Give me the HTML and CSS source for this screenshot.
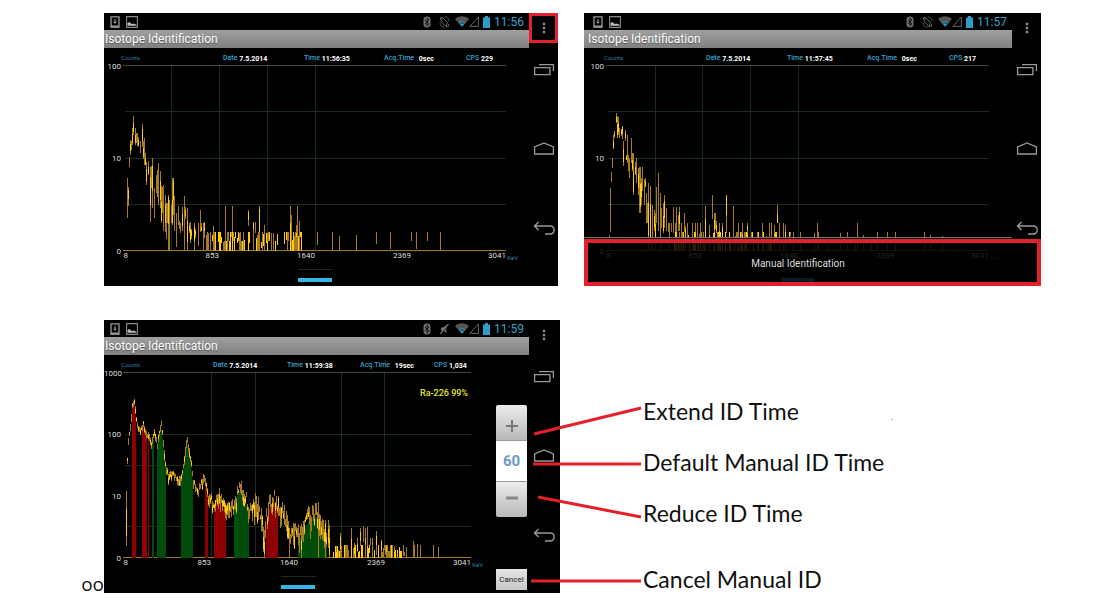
FILE: index.html
```html
<!DOCTYPE html>
<html lang="en">
<head>
    <meta charset="UTF-8">
    <meta name="viewport" content="width=device-width, initial-scale=1.0">
    <title>Isotope Identification - Manual ID</title>
    <link rel="stylesheet" href="styles.css">
</head>
<body>
    <!-- Shared icons -->
    <svg class="sprite" aria-hidden="true">
        <symbol id="i-usb" viewBox="0 0 10 12">
            <path d="M1 .8h8v10.4H1z" fill="none" stroke="#999" stroke-width="1.3"/>
            <path d="M1 9.5h8v2H1z" fill="#999"/>
            <path d="M5 3v4M3.8 5.6L5 7.3l1.200-1.700" fill="none" stroke="#aaa"/>
        </symbol>
        <symbol id="i-pic" viewBox="0 0 12 12">
            <path d="M.6.6h10.800v10.800H.6z" fill="none" stroke="#888" stroke-width="1.100"/>
            <path d="M1.500 9.800V7l2-1 1.500 1.500 1 .5 1.500-.5 3 1.300v1z" fill="#bbb"/>
        </symbol>
        <symbol id="i-bt" viewBox="0 0 8 12">
            <rect x=".5" y=".5" width="7" height="11" rx="3.200" fill="#6c6c6c"/>
            <path d="M2 4l4 4-2 2V2l2 2-4 4" fill="none" stroke="#111" stroke-width=".9"/>
        </symbol>
        <symbol id="i-rotate" viewBox="0 0 11 12">
            <path d="M3.500 1.500l5 5-1.500 4-5-5z" fill="none" stroke="#6c6c6c"/>
            <path d="M5.500 .8c2.500 0 4.500 1.500 4.500 4.500M5.500 11.200C3 11.200 1 9.700 1 6.700M9.500 8v2.500H7M1.500 4V1.500H4" fill="none" stroke="#555"/>
        </symbol>
        <symbol id="i-mute" viewBox="0 0 11 12">
            <path d="M2 4.500h2L7.500 2v8L4 7.500H2z" fill="#777"/>
            <path d="M9.500 1l-8 10" stroke="#777" stroke-width="1.300"/>
            <path d="M10 1.800l-8 10" stroke="#000" stroke-width=".7"/>
        </symbol>
        <symbol id="i-wifi" viewBox="0 0 14 11">
            <path d="M0 3c4-3.600 10-3.600 14 0L7 11z" fill="#555"/>
            <path d="M3.800 6.500c2-1.600 4.400-1.600 6.400 0L7 10.600z" fill="#2a9cc8"/>
            <path d="M4.800 7.600c1.300-1 3.100-1 4.400 0" fill="none" stroke="#000" stroke-width=".7"/>
        </symbol>
        <symbol id="i-signal" viewBox="0 0 10 11">
            <path d="M9.400 1v9.400H.8z" fill="none" stroke="#666"/>
        </symbol>
        <symbol id="i-battery" viewBox="0 0 7 12">
            <path d="M2 0h3v1.500h2V12H0V1.500h2z" fill="#2f9dc9"/>
        </symbol>
        <symbol id="i-more" viewBox="0 0 4 12">
            <path d="M.8 .8h2.400v2.400H.8zM.8 4.800h2.400v2.400H.8zM.8 8.800h2.400v2.400H.8z" fill="#888"/>
        </symbol>
        <symbol id="i-recent" viewBox="0 0 22 13">
            <path d="M1.600 4.600h15.300v7H1.600zM6 1.600h14.400V8" fill="none" stroke="#999" stroke-width="1.300"/>
        </symbol>
        <symbol id="i-home" viewBox="0 0 22 13">
            <path d="M1.600 12V5L11 1l9.400 4v7z" fill="none" stroke="#999" stroke-width="1.300"/>
        </symbol>
        <symbol id="i-back" viewBox="0 0 24 14">
            <path d="M6.500 1L2.500 5l4 4M2.500 5H18c5.500 0 5.500 8 0 8h-5" fill="none" stroke="#999" stroke-width="1.400"/>
        </symbol>
    </svg>

    <main class="page">
        <div class="row row-top">
            <section class="screen">
                <div class="app">
                    <div class="status">
                        <svg class="i-usb"><use href="#i-usb"/></svg>
                        <svg class="i-pic"><use href="#i-pic"/></svg>
                        <svg class="i-bt"><use href="#i-bt"/></svg>
                        <svg class="i-mode"><use href="#i-rotate"/></svg>
                        <svg class="i-wifi"><use href="#i-wifi"/></svg>
                        <svg class="i-signal"><use href="#i-signal"/></svg>
                        <svg class="i-battery"><use href="#i-battery"/></svg>
                        <span class="clock">11:56</span>
                    </div>
                    <h2 class="title">Isotope Identification</h2>
                    <div class="meta">
                        <span class="unit">Counts</span>
                        <span>Date <b>7.5.2014</b></span>
                        <span>Time <b>11:56:35</b></span>
                        <span>Acq.Time <b class="acq">0sec</b></span>
                        <span>CPS <b>229</b></span>
                    </div>
                    <svg class="chart" id="chart-a" viewBox="0 0 425 223"></svg>
                </div>
                <nav class="rail">
                    <button class="marked" aria-label="Menu"><svg class="i-more"><use href="#i-more"/></svg></button>
                    <button aria-label="Recent apps"><svg class="i-nav"><use href="#i-recent"/></svg></button>
                    <button aria-label="Home"><svg class="i-nav"><use href="#i-home"/></svg></button>
                    <button aria-label="Back"><svg class="i-back"><use href="#i-back"/></svg></button>
                </nav>
            </section>

            <section class="screen inset">
                <div class="app">
                    <div class="status">
                        <svg class="i-usb"><use href="#i-usb"/></svg>
                        <svg class="i-pic"><use href="#i-pic"/></svg>
                        <svg class="i-bt"><use href="#i-bt"/></svg>
                        <svg class="i-mode"><use href="#i-rotate"/></svg>
                        <svg class="i-wifi"><use href="#i-wifi"/></svg>
                        <svg class="i-signal"><use href="#i-signal"/></svg>
                        <svg class="i-battery"><use href="#i-battery"/></svg>
                        <span class="clock">11:57</span>
                    </div>
                    <h2 class="title">Isotope Identification</h2>
                    <div class="meta">
                        <span class="unit">Counts</span>
                        <span>Date <b>7.5.2014</b></span>
                        <span>Time <b>11:57:45</b></span>
                        <span>Acq.Time <b class="acq">0sec</b></span>
                        <span>CPS <b>217</b></span>
                    </div>
                    <svg class="chart" id="chart-b" viewBox="-3 0 428 223"></svg>
                    <button class="menu-item">Manual Identification</button>
                </div>
                <nav class="rail">
                    <button aria-label="Menu"><svg class="i-more"><use href="#i-more"/></svg></button>
                    <button aria-label="Recent apps"><svg class="i-nav"><use href="#i-recent"/></svg></button>
                    <button aria-label="Home"><svg class="i-nav"><use href="#i-home"/></svg></button>
                    <button aria-label="Back"><svg class="i-back"><use href="#i-back"/></svg></button>
                </nav>
                <div class="menu-frame"></div>
            </section>
        </div>

        <div class="row row-bottom">
            <span class="margin-note">oo</span>

            <section class="screen wide-rail">
                <div class="app">
                    <div class="status">
                        <svg class="i-usb"><use href="#i-usb"/></svg>
                        <svg class="i-pic"><use href="#i-pic"/></svg>
                        <svg class="i-bt"><use href="#i-bt"/></svg>
                        <svg class="i-mode"><use href="#i-mute"/></svg>
                        <svg class="i-wifi"><use href="#i-wifi"/></svg>
                        <svg class="i-signal"><use href="#i-signal"/></svg>
                        <svg class="i-battery"><use href="#i-battery"/></svg>
                        <span class="clock">11:59</span>
                    </div>
                    <h2 class="title">Isotope Identification</h2>
                    <div class="split">
                        <div class="plot">
                            <div class="meta tight">
                                <span class="unit">Counts</span>
                                <span>Date <b>7.5.2014</b></span>
                                <span>Time <b>11:59:38</b></span>
                                <span>Acq.Time <b class="acq">19sec</b></span>
                                <span>CPS <b>1,034</b></span>
                            </div>
                            <svg class="chart" id="chart-c" viewBox="0 0 388 223"></svg>
                        </div>
                        <div class="controls">
                            <div class="stepper">
                                <button aria-label="Extend time"><svg viewBox="0 0 12 12"><path d="M6 0v12M0 6h12" stroke="#777" stroke-width="2"/></svg></button>
                                <input type="text" value="60" aria-label="ID time">
                                <button aria-label="Reduce time"><svg viewBox="0 0 12 12"><path d="M0 4h12" stroke="#888" stroke-width="3"/></svg></button>
                            </div>
                            <button class="cancel">Cancel</button>
                        </div>
                    </div>
                </div>
                <nav class="rail">
                    <button aria-label="Menu"><svg class="i-more"><use href="#i-more"/></svg></button>
                    <button aria-label="Recent apps"><svg class="i-nav"><use href="#i-recent"/></svg></button>
                    <button aria-label="Home"><svg class="i-nav"><use href="#i-home"/></svg></button>
                    <button aria-label="Back"><svg class="i-back"><use href="#i-back"/></svg></button>
                </nav>
            </section>

            <div class="callouts">
                <svg class="leaders" viewBox="0 0 116 273">
                    <path d="M6 114L113 88M5 144h108M10 177l103 20M3 261h110" stroke="#e3202b" stroke-width="3"/>
                </svg>
                <ul>
                    <li>Extend ID Time<span class="speck">.</span></li>
                    <li>Default Manual ID Time</li>
                    <li>Reduce ID Time</li>
                    <li>Cancel Manual ID</li>
                </ul>
            </div>
        </div>
    </main>
    <script src="charts.js"></script>
</body>
</html>
```

FILE: styles.css
```css
body {
    margin: 0;
    background: #fff;
    font-family: Roboto, Arial, sans-serif;
    overflow-x: hidden;
}
button, input {
    font-family: inherit;
    margin: 0;
    padding: 0;
    border: 0;
}
.sprite {
    position: absolute;
    width: 0;
    height: 0;
}
.page {
    padding: 13px 68px 0 0;
}
.row {
    display: grid;
    align-items: start;
}
.row-top {
    grid-template-columns: 454fr 457fr;
    gap: 26px;
    padding-left: 104px;
}
.row-bottom {
    grid-template-columns: 104px 456fr 481fr;
    margin-top: 34px;
}

/* Device screen */
.screen {
    display: flex;
    position: relative;
    background: #000;
    color: #fff;
}
.app {
    flex: 1;
    min-width: 0;
    position: relative;
}
.status {
    display: flex;
    align-items: center;
    height: 17px;
    padding: 0 5px 0 6px;
}
.title {
    margin: 0;
    padding-left: 1px;
    height: 18px;
    line-height: 18px;
    font-size: 12px;
    font-weight: 400;
    background: linear-gradient(#a0a0a0, #808080);
    text-shadow: 0 1px 1px #555;
}
.clock {
    font-size: 12px;
    line-height: 16px;
    color: #38a3cd;
    margin-left: 4px;
}
.i-usb {
    width: 10px;
    height: 12px;
}
.i-pic {
    width: 12px;
    height: 12px;
    margin-left: 6px;
}
.i-bt {
    width: 8px;
    height: 12px;
    margin-left: auto;
}
.i-mode {
    width: 11px;
    height: 12px;
    margin: 0 5px 0 8px;
}
.i-wifi {
    width: 14px;
    height: 11px;
}
.i-signal {
    width: 10px;
    height: 11px;
}
.i-battery {
    width: 7px;
    height: 12px;
    margin-left: 4px;
}

/* Header line above the chart */
.meta {
    display: grid;
    grid-template-columns: 102px 81px 80px 82px 1fr;
    height: 15px;
    padding: 5px 0 0 17px;
    box-sizing: border-box;
    font-size: 7px;
    line-height: 10px;
    font-weight: 500;
    color: #38a3cd;
    white-space: nowrap;
}
.meta.tight {
    grid-template-columns: 92px 74px 73px 74px 1fr;
}
.meta b {
    color: #fff;
    position: relative;
    top: 1px;
}
.meta .acq {
    margin-left: 3px;
}
.meta .unit {
    font-size: 6px;
    font-weight: 400;
    color: #2a7da0;
}
.inset .status {
    padding-left: 9px;
}
.inset .title {
    padding-left: 4px;
}
.inset .meta {
    padding-left: 20px;
}

/* Chart */
.chart {
    display: block;
    width: 100%;
    height: auto;
    font-size: 8px;
    fill: #ddd;
}
.chart line {
    shape-rendering: crispEdges;
}
.chart .grid {
    stroke: #1c2c1c;
}
.chart .axis {
    stroke: #3c4a38;
}
.chart .base {
    stroke: #a07818;
}
.chart .dim {
    stroke: #a57c25;
}
.chart .hot {
    stroke: #fc1;
}
.chart .red {
    fill: #8c0000;
}
.chart .green {
    fill: #004c0a;
}
.chart .kev {
    font-size: 6px;
    fill: #2a86b0;
}
.chart .tag {
    font-size: 9px;
    font-weight: 500;
    fill: #e6e619;
}
.chart .pager {
    fill: #33b5e5;
}

/* Navigation rail */
.rail {
    width: 29px;
    display: grid;
    grid-template-rows: 30px 52px 106px 54px;
}
.wide-rail .rail {
    width: 31px;
    padding-right: 1px;
    box-sizing: border-box;
}
.rail button {
    display: flex;
    align-items: center;
    justify-content: center;
    background: none;
}
.rail .marked {
    border: 3px solid #e3202b;
}
.i-more {
    width: 4px;
    height: 12px;
}
.i-nav {
    width: 22px;
    height: 13px;
}
.i-back {
    width: 24px;
    height: 14px;
}

/* Options menu */
.menu-item {
    position: absolute;
    left: 0;
    right: 0;
    bottom: 0;
    width: 100%;
    height: 49px;
    padding-top: 3px;
    border-top: 1px solid #777;
    background: rgba(0, 0, 0, 0.85);
    color: #ddd;
    font-size: 10px;
    line-height: 10px;
}
.menu-frame {
    position: absolute;
    left: 0;
    right: 0;
    bottom: 0;
    height: 47px;
    box-sizing: border-box;
    border: 4px solid #e3202b;
    pointer-events: none;
}

/* Manual ID controls */
.split {
    display: flex;
}
.plot {
    flex: 1;
    min-width: 0;
}
.controls {
    width: 37px;
    padding: 50px 2px 3px 4px;
    box-sizing: border-box;
    display: flex;
    flex-direction: column;
    justify-content: space-between;
}
.stepper {
    display: flex;
    flex-direction: column;
    border-radius: 2px;
    overflow: hidden;
}
.stepper button {
    height: 35px;
    background: linear-gradient(#ececec, #b8b8b8);
}
.stepper button:first-child {
    padding-top: 6px;
}
.stepper button svg {
    display: block;
    width: 12px;
    height: 12px;
    margin: 0 auto;
}
.stepper input {
    height: 42px;
    width: 100%;
    background: #fff;
    border-top: 1px solid #999;
    border-bottom: 1px solid #999;
    box-sizing: border-box;
    text-align: center;
    font-size: 15px;
    font-weight: 700;
    color: #6c9ad0;
}
.cancel {
    height: 21px;
    background: linear-gradient(#e4e4e4, #c8c8c8);
    color: #222;
    font-size: 8px;
}

/* Callouts */
.callouts {
    position: relative;
    font-family: Lato, Calibri, sans-serif;
}
.callouts ul {
    list-style: none;
    margin: 0;
    padding: 78px 0 0 83px;
    font-size: 23px;
    line-height: 26px;
    color: #111;
}
.callouts li {
    margin-bottom: 25px;
}
.callouts li:last-child {
    margin: 40px 0 0;
}
.leaders {
    position: absolute;
    left: -32px;
    top: 0;
    width: 116px;
    height: 273px;
}
.speck {
    font-size: 10px;
    line-height: 10px;
    color: #888;
    margin-left: 92px;
}
.margin-note {
    align-self: end;
    text-align: right;
    font-family: "Open Sans", sans-serif;
    font-size: 19px;
    line-height: 18px;
    color: #111;
}
```

FILE: charts.js
```js
const NS = 'http://www.w3.org/2000/svg';
const BASE = 188;

function add(svg, name, attrs, text) {
    const el = document.createElementNS(NS, name);
    for (const key in attrs) el.setAttribute(key, attrs[key]);
    if (text) el.textContent = text;
    svg.appendChild(el);
}

function line(svg, cls, x1, y1, x2, y2) {
    add(svg, 'line', { class: cls, x1, y1, x2, y2 });
}

function label(svg, x, y, text, cls) {
    add(svg, 'text', { x, y, 'text-anchor': 'end', class: cls || '' }, text);
}

// small repeatable generator, so the noise is the same on each load
let seed = 7;
function rnd() {
    seed = (seed * 16807) % 2147483647;
    return seed / 2147483647;
}

function bar(svg, x, top, bottom) {
    x += 0.5;
    line(svg, 'dim', x, top, x, bottom);
    if (rnd() > 0.5) {
        const len = (bottom - top) * 0.5;
        const start = top + rnd() * (bottom - top - len);
        line(svg, 'hot', x, start, x, start + len);
    }
}

// stems: "x,top,bottom" (bottom defaults to the base line)
function stems(svg, data) {
    data.trim().split(/\s+/).forEach(item => {
        const [x, top, bottom] = item.split(',').map(Number);
        bar(svg, x, top, bottom || BASE);
    });
}

// isolated counts, one plain line each
function singles(svg, data) {
    data.trim().split(/\s+/).forEach(item => {
        const [x, top, bottom] = item.split(',').map(Number);
        line(svg, 'dim', x + 0.5, top, x + 0.5, bottom || BASE);
    });
}

function noise(svg, from, to, top, density) {
    for (let x = from; x < to; x += 1) {
        if (rnd() > density) continue;
        const t = top + (rnd() > 0.5 ? rnd() * (BASE - top) * 0.6 : 0);
        const b = rnd() > 0.35 ? BASE : t + 4 + rnd() * 8;
        line(svg, rnd() > 0.55 ? 'hot' : 'dim', x + 0.5, t, x + 0.5, Math.min(b, BASE));
    }
}

function frame(svg, right, verticals, horizontals) {
    verticals.forEach(x => line(svg, 'grid', x, 2.5, x, BASE));
    horizontals.forEach(y => line(svg, 'grid', 21, y, right, y));
    line(svg, 'axis', 19, 2.5, right, 2.5);
    line(svg, 'base', 19, BASE - 0.5, right, BASE - 0.5);
}

function pager(svg, x) {
    line(svg, 'grid', x, 206.5, x + 35, 206.5);
    add(svg, 'rect', { class: 'pager', x, y: 215, width: 34, height: 4 });
}

function xLabels(svg, ends, kev) {
    ['8', '853', '1640', '2369', '3041'].forEach((t, i) => label(svg, ends[i], 195, t));
    label(svg, kev, 197, 'KeV', 'kev');
}

const a = document.getElementById('chart-a');
frame(a, 402, [67.5, 115.5, 163.5, 211.5], [48.5, 95.5, 141.5]);
label(a, 17, 6, '100');
label(a, 17, 98, '10');
label(a, 17, 191, '0');
xLabels(a, [24, 115, 211, 307, 402], 414);
stems(a, `23,115,155 24,124,143 25,94,104 26,77,92 27,78,87 28,65,82 29,53,72 31,65,82 32,70,80
    33,70,83 34,74,84 36,78,90 38,61,84 39,78,96 40,75,102 41,90,102 42,99,122 44,98,112 46,104,159
    47,103,125 48,95,145 50,125,155 52,112,130 53,107,134 54,100,142 56,108,145 57,123,160 58,124,150
    59,122,168 61,132,169 62,140,176 63,140,160 64,132,187 65,137,187 67,142,160 68,115,162 69,115,152
    70,133,168 72,150,184 74,143,162 75,158,166 76,160,170 78,144,168 80,133,188 81,144,156 83,145,187
    85,160,170 86,159,180 87,166,176 90,160,188 91,166,175 94,160,183 96,147,169 97,160,168 99,160,188
    100,159,175 109,163 121,143 128,143 144,147,163 149,159,172 151,159,170 155,143 160,162 163,170
    186,143 187,152 192,162 193,143 195,158`);
singles(a, `213,169,182 228,169 235,173 252,172 272,169,181
    286,169,186 307,169,178 312,169,186 323,169,178 336,169,188`);
noise(a, 102, 116, 169, 0.9);
noise(a, 116, 141, 169, 0.9);
noise(a, 141, 174, 169, 0.7);
noise(a, 180, 198, 169, 0.8);
pager(a, 194);

const b = document.getElementById('chart-b');
frame(b, 402, [68.5, 115.5, 163.5, 211.5], [48.5, 95.5, 141.5]);
label(b, 17, 6, '100');
label(b, 17, 98, '10');
label(b, 17, 191, '0');
xLabels(b, [24, 115, 211, 307, 402], 414);
stems(b, `22,172,187 23,125,169 24,109,119 25,95,105 26,72,86 27,68,75 29,50,60 30,53,75 31,54,72
    32,65,75 34,66,73 35,63,76 36,78,103 38,67,78 39,92,97 40,72,100 41,92,108 42,95,115 44,75,100
    45,90,108 46,90,132 48,99,112 49,95,120 51,105,132 52,104,150 53,104,150 54,115,142 55,104,128
    57,116,142 58,115,124 59,130,160 60,140,160 61,120,188 63,123,188 65,142,188 67,147,168 68,150,188
    69,124,160 71,110,168 73,130,188 74,145,165 76,140,170 77,132,165 79,145,168 81,160,169 82,160,188
    84,160,169 86,144,170 88,160,169 89,144,170 91,152,168 92,144,168 94,160,188 97,150,169 98,163,188
    100,160,175 105,160 108,160,170 110,160 113,160 118,143 122,162 125,132,156 127,150,170 128,150,166
    129,158,170 132,160 135,160 139,132,170 146,143 151,160 155,160 160,160,170 175,160 182,160
    184,160 187,162 190,142,160 192,160 196,160 198,162`);
singles(b, `206,169 213,169 227,170 230,160 231,169 240,182
    253,170 260,169 268,174 270,160 276,172 284,174 290,169 300,169 308,169 337,169 343,172 355,173`);
noise(b, 84, 140, 169, 0.6);
noise(b, 140, 205, 169, 0.5);
pager(b, 194);

// Ra-226 spectrum: outline points of the curve
const curve = [[23, 90], [24, 70], [26, 55], [28, 36], [30, 31], [32, 47], [34, 57], [37, 58], [39, 53],
    [42, 63], [45, 66], [47, 74], [50, 60], [53, 74], [56, 56], [57, 54], [59, 70], [61, 94], [64, 104],
    [70, 106], [76, 111], [78, 104], [81, 80], [83, 69], [85, 80], [87, 93], [89, 112], [93, 122],
    [97, 113], [100, 106], [104, 128], [110, 134], [115, 123], [118, 135], [124, 140], [129, 136],
    [134, 122], [137, 118], [141, 126], [145, 142], [150, 133], [155, 142], [160, 163], [165, 137],
    [170, 130], [174, 140], [180, 147], [186, 168], [190, 157], [198, 167], [203, 152], [209, 144],
    [214, 146], [218, 156], [223, 170]];

function curveY(x) {
    const i = Math.max(1, curve.findIndex(p => p[0] >= x));
    const [x1, y1] = curve[i - 1];
    const [x2, y2] = curve[i];
    return y1 + (y2 - y1) * (x - x1) / (x2 - x1);
}

function region(svg, cls, from, to) {
    let points = `${from},${BASE} `;
    for (let x = from; x <= to; x++) points += `${x},${curveY(x) + 2} `;
    add(svg, 'polygon', { class: cls, points: points + `${to},${BASE}` });
}

const c = document.getElementById('chart-c');
frame(c, 367, [107.5, 151.5, 237.5, 280.5], [64.5, 95.5, 156.5]);
label(c, 18, 6, '1000');
label(c, 17, 67, '100');
label(c, 17, 129, '10');
label(c, 17, 191, '0');
xLabels(c, [24, 107, 194, 281, 367], 379);
[['red', 28, 32], ['red', 38, 43], ['red', 44, 45], ['green', 48, 50], ['green', 53, 62],
    ['green', 77, 89], ['red', 101, 104], ['red', 110, 122], ['green', 130, 145], ['red', 162, 174],
    ['green', 194, 223]].forEach(r => region(c, ...r));
for (let x = 23; x < 223; x++) {
    const y = curveY(x);
    const spread = x < 60 ? 4 : x < 105 ? 7 : x < 150 ? 13 : 21;
    const top = y - rnd() * spread * 0.7;
    bar(c, x, top, Math.min(BASE, top + 4 + rnd() * spread));
}
stems(c, `22,121,176 160,165 185,170 197,168 214,132 221,150 224,150,178 225,155 232,176 236,163 242,175
    247,158,188 250,173 253,168,182 256,158,176 259,156,172 261,158 263,157,180 266,168,175
    268,168 272,161,185 277,170 282,175 283,175 290,176`);
singles(c, '309,171 310,175 313,174 316,175 329,175 334,177');
noise(c, 224, 238, 176, 0.5);
noise(c, 240, 284, 175, 0.5);
noise(c, 284, 303, 175, 0.75);
label(c, 364, 26, 'Ra-226  99%', 'tag');
pager(c, 177);
```
